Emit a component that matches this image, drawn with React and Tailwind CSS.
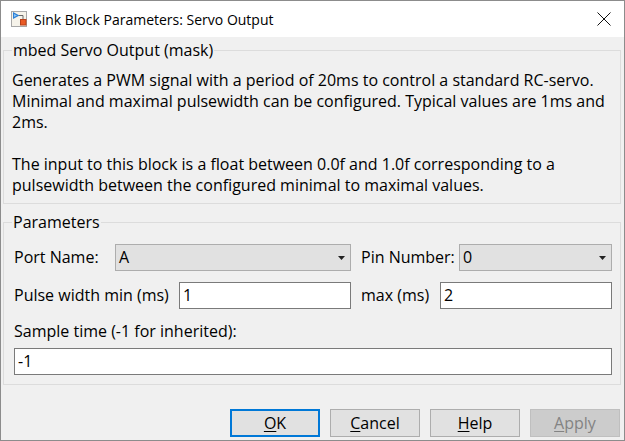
import React from "react";

function BlockIcon() {
  return (
    <svg width="16" height="16" viewBox="0 0 16 16" className="shrink-0">
      <rect x="0.5" y="0.5" width="15" height="15" fill="#f6f3ea" stroke="#a8a8a8" />
      <path d="M8 4.5H12V9" fill="none" stroke="#6a6a6a" strokeWidth="1" />
      <polygon points="2,1 2,8 8.5,4.5" fill="#2b7fd6" />
      <polygon points="3,3 3,6 6,4.5" fill="#8cc4f4" />
      <rect x="9.5" y="8.5" width="5.5" height="5.5" fill="#ea5a25" stroke="#b8401a" />
    </svg>
  );
}

function CloseIcon() {
  return (
    <svg width="14" height="14" viewBox="0 0 14 14" className="shrink-0">
      <path d="M0.5 0.5L13.5 13.5M13.5 0.5L0.5 13.5" stroke="#111" strokeWidth="1" fill="none" />
    </svg>
  );
}

function Arrow() {
  return (
    <svg width="7" height="4" viewBox="0 0 7 4" className="shrink-0">
      <polygon points="0,0 7,0 3.5,4" fill="#222" />
    </svg>
  );
}

function Select({ value, width }) {
  return (
    <div className={`${width} h-[27px] bg-[#e1e1e1] border border-[#adadad] flex items-center justify-between pl-[3px] pr-[5px] leading-[21px]`}>
      <span>{value}</span>
      <Arrow />
    </div>
  );
}

function TextBox({ value, width }) {
  return (
    <div className={`${width} h-[27px] bg-white border border-[#7a7a7a] flex items-center pl-[3px] leading-[21px]`}>
      <span>{value}</span>
    </div>
  );
}

function Btn({ mn, rest, primary, disabled }) {
  const base = "w-[90px] h-[28px] flex items-center justify-center leading-[21px]";
  const cls = primary
    ? `${base} bg-[#e1e1e1] border-2 border-[#0078d7]`
    : disabled
    ? `${base} bg-[#cccccc] border border-[#bfbfbf] text-[#838383]`
    : `${base} bg-[#e1e1e1] border border-[#adadad]`;
  return (
    <div className={cls}>
      <span>
        <span className="underline underline-offset-[2px]">{mn}</span>
        {rest}
      </span>
    </div>
  );
}

export default function App() {
  return (
    <div className="w-[625px] h-[441px] border border-[#8c8c8c] bg-[#f0f0f0] flex flex-col font-['Open_Sans',sans-serif] text-[16px] text-black overflow-hidden">
      {/* Title bar */}
      <div className="h-[36px] bg-white flex items-center shrink-0">
        <div className="ml-[10px] flex">
          <BlockIcon />
        </div>
        <span className="ml-[7px] pt-[1px] text-[14px] leading-[20px] text-black">
          Sink Block Parameters: Servo Output
        </span>
        <div className="ml-auto mr-[13px] flex">
          <CloseIcon />
        </div>
      </div>

      <div className="flex flex-col pl-[2px] pr-[3px]">
        {/* Description group */}
        <div className="relative mt-[13px] h-[154px] border border-[#dcdcdc] pt-[19px] pl-[8px] leading-[21px] whitespace-nowrap">
          <span className="absolute left-[8px] top-[-11px] px-[1px] bg-[#f0f0f0] leading-[20px]">
            mbed Servo Output (mask)
          </span>
          <div>Generates a PWM signal with a period of 20ms to control a standard RC-servo.</div>
          <div>Minimal and maximal pulsewidth can be configured. Typical values are 1ms and</div>
          <div>2ms.</div>
          <div className="h-[21px]"></div>
          <div>The input to this block is a float between 0.0f and 1.0f corresponding to a</div>
          <div>pulsewidth between the configured minimal to maximal values.</div>
        </div>

        {/* Parameters group */}
        <div className="relative mt-[18px] h-[163px] border border-[#dcdcdc] pt-[21px] pl-[10px] whitespace-nowrap">
          <span className="absolute left-[8px] top-[-11px] px-[1px] bg-[#f0f0f0] leading-[20px]">
            Parameters
          </span>
          <div className="flex items-center h-[27px]">
            <span className="w-[101px] leading-[21px]">Port Name:</span>
            <Select value="A" width="w-[236px]" />
            <span className="ml-[10px] w-[98px] leading-[21px]">Pin Number:</span>
            <Select value="0" width="w-[153px]" />
          </div>
          <div className="flex items-center h-[27px] mt-[11px]">
            <span className="w-[165px] leading-[21px]">Pulse width min (ms)</span>
            <TextBox value="1" width="w-[172px]" />
            <span className="ml-[10px] w-[79px] leading-[21px]">max (ms)</span>
            <TextBox value="2" width="w-[172px]" />
          </div>
          <div className="mt-[12px] leading-[21px]">Sample time (-1 for inherited):</div>
          <div className="mt-[6px]">
            <TextBox value="-1" width="w-[598px]" />
          </div>
        </div>

        {/* Buttons */}
        <div className="mt-[24px] mr-[1px] flex justify-end gap-[10px]">
          <Btn mn="O" rest="K" primary />
          <Btn mn="C" rest="ancel" />
          <Btn mn="H" rest="elp" />
          <Btn mn="A" rest="pply" disabled />
        </div>
      </div>
    </div>
  );
}
